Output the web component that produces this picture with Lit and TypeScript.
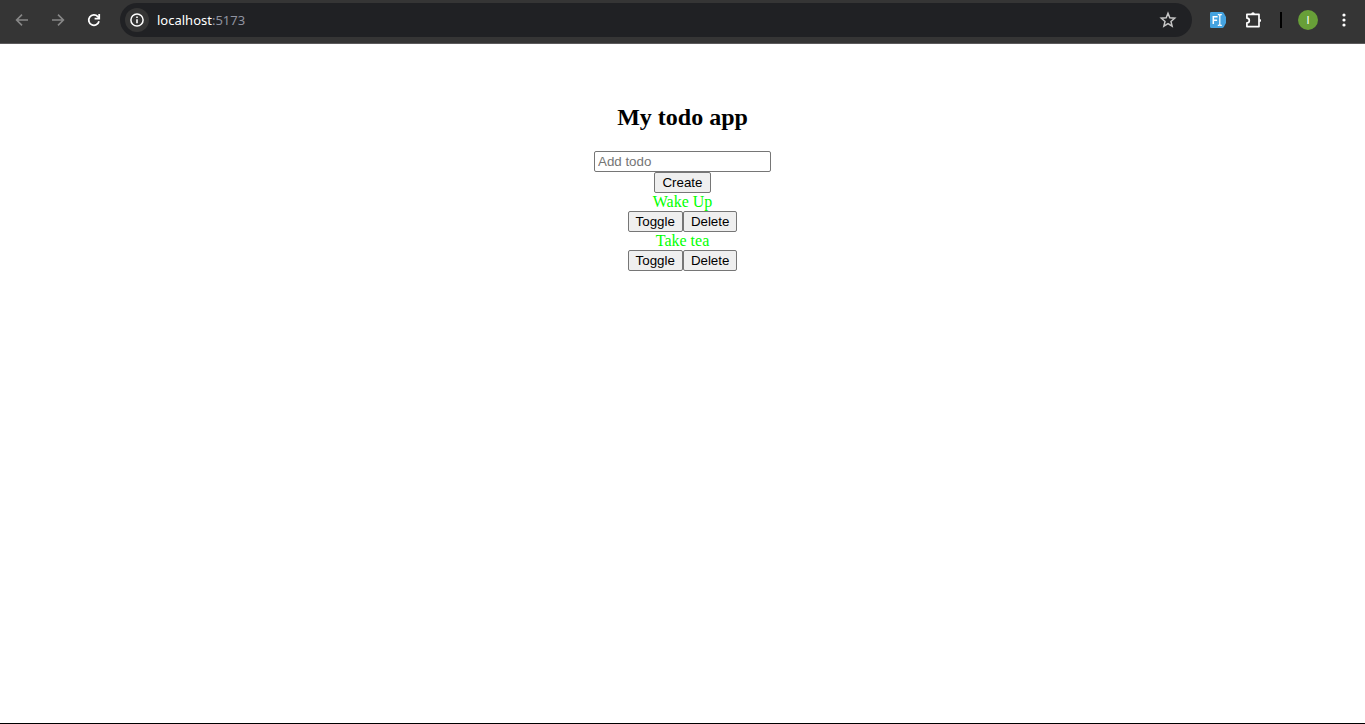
import { LitElement, html, css } from "lit";
import { customElement, property, state } from "lit/decorators.js";
import { classMap } from "lit/directives/class-map.js";

@customElement("browser-bar")
class BrowserBar extends LitElement {
  @property() host = "";
  @property() port = "";

  static styles = css`
    :host {
      display: block;
      background: #353535;
      border-bottom: 1px solid #5c5a5c;
      font-family: "Segoe UI", "Noto Sans", sans-serif;
    }
    .bar {
      display: flex;
      align-items: center;
      padding: 3px 9px 6px 10px;
    }
    .nav,
    .actions,
    .account {
      display: flex;
      align-items: center;
      gap: 12px;
    }
    button {
      display: flex;
      align-items: center;
      justify-content: center;
      width: 24px;
      height: 34px;
      padding: 0;
      border: 0;
      background: none;
      color: #fff;
    }
    button:disabled {
      color: #878787;
    }
    .omnibox {
      flex: 1;
      display: flex;
      align-items: center;
      height: 34px;
      margin: 0 14px;
      padding: 0 12px 0 5px;
      border-radius: 17px;
      box-sizing: border-box;
      background: #202124;
    }
    .omnibox .info {
      height: 24px;
      border-radius: 12px;
      background: #353535;
    }
    .omnibox .star {
      color: #c7c7c7;
    }
    .url {
      flex: 1;
      padding-left: 8px;
      color: #fff;
      font-size: 13px;
      line-height: 20px;
      outline: none;
    }
    .port {
      color: #9093a0;
    }
    .divider {
      width: 2px;
      height: 16px;
      margin: 0 14px;
      background: #000;
    }
    .avatar {
      width: 20px;
      height: 20px;
      border-radius: 10px;
      background: #689f38;
      color: #fff;
      font-size: 11px;
      line-height: 20px;
      text-align: center;
    }
    svg {
      display: block;
      fill: none;
      stroke: currentColor;
    }
    svg.solid {
      fill: currentColor;
      stroke: none;
    }
  `;

  render() {
    return html`
      <nav class="bar" aria-label="Browser">
        <div class="nav">
          <button disabled aria-label="Back">
            <svg width="16" height="16" stroke-width="1.6"><path d="M14 8H3M8 2.6 2.6 8 8 13.4" /></svg>
          </button>
          <button disabled aria-label="Forward">
            <svg width="16" height="16" stroke-width="1.6"><path d="M2 8h11M8 2.6 13.4 8 8 13.4" /></svg>
          </button>
          <button aria-label="Reload">
            <svg width="16" height="16" stroke-width="1.8"><path d="M13 9.3A5.2 5.2 0 1 1 11.8 4.6L13 6" /><path d="M13.2 2v4.7H8.6" /></svg>
          </button>
        </div>
        <div class="omnibox">
          <button class="info" aria-label="Site information">
            <svg width="16" height="16" stroke-width="1.5"><circle cx="8" cy="8" r="6.1" /><path d="M8 7.2v4M8 4.5v1.6" stroke-width="1.6" /></svg>
          </button>
          <div class="url" role="textbox" contenteditable="true" spellcheck="false" aria-label="Address">${this.host}<span class="port">:${this.port}</span></div>
          <button class="star" aria-label="Bookmark">
            <svg width="18" height="18" stroke-width="1.5"><path d="m9 2.3 1.8 4.5 4.9.4-3.7 3.2 1.1 4.8L9 12.6l-4.1 2.6L6 10.4 2.3 7.2l4.9-.4z" /></svg>
          </button>
        </div>
        <div class="actions">
          <button aria-label="Text extension">
            <svg class="solid" width="16" height="16">
              <path d="M1.2 0H12Q13.200 0 13.800 1L16 5v6l-2.200 4Q13.200 16 12 16H1.200Q0 16 0 14.800V1.200Q0 0 1.200 0z" fill="#45a3e0" />
              <path d="M3.300 12V4.700H7.600M3.300 8.200h3.800" fill="none" stroke="#fff" stroke-width="1.500" />
              <path d="M7.800 2.700h1.200l.8.800.8-.8h1.200M9.800 3.500v9M7.800 13.300h1.200l.8-.8.8.800h1.200" fill="none" stroke="#fff" stroke-width="1.200" />
            </svg>
          </button>
          <button aria-label="Extensions">
            <svg width="18" height="18" stroke-width="1.700" stroke-linejoin="round">
              <path d="M1.900 3.400H14v12.200H1.900v-3.700a2.400 2.400 0 0 0 0-4.800z" />
              <path d="M6.200 3.100a1.800 1.800 0 0 1 3.600 0zM14.300 7.700a1.800 1.800 0 0 1 0 3.600z" fill="#fff" stroke="none" />
            </svg>
          </button>
        </div>
        <div class="divider"></div>
        <div class="account">
          <button aria-label="Profile"><span class="avatar">I</span></button>
          <button aria-label="Menu">
            <svg class="solid" width="16" height="16"><circle cx="8" cy="3" r="1.6" /><circle cx="8" cy="8" r="1.6" /><circle cx="8" cy="13" r="1.6" /></svg>
          </button>
        </div>
      </nav>
    `;
  }
}

interface Todo {
  title: string;
  done: boolean;
}

@customElement("app-root")
class AppRoot extends LitElement {
  @state() private todos: Todo[] = [
    { title: "Wake Up", done: true },
    { title: "Take tea", done: true },
  ];
  @state() private draft = "";

  static styles = css`
    :host {
      display: flex;
      flex-direction: column;
      min-height: 100vh;
      box-sizing: border-box;
      border-bottom: 1px solid #000;
      background: #fff;
      color: #000;
      font: 16px/18px "Liberation Serif", "Times New Roman", serif;
    }
    main {
      flex: 1;
      padding-top: 40px;
      text-align: center;
    }
    h2 {
      margin: 20px 0;
      font-size: 24px;
      line-height: 27px;
    }
    form,
    .row {
      display: flex;
      justify-content: center;
    }
    form {
      flex-direction: column;
      align-items: center;
    }
    input,
    button {
      box-sizing: border-box;
      height: 21px;
      margin: 0;
      border: 1px solid #767676;
      border-radius: 2px;
      font-family: "Liberation Sans", Arial, sans-serif;
      line-height: 15px;
      color: #000;
    }
    input {
      width: 177px;
      padding: 1px 3px;
      background: #fff;
    }
    input::placeholder {
      color: #757575;
    }
    button {
      padding: 1px 7px;
      background: #efefef;
    }
    ul {
      margin: 0;
      padding: 0;
      list-style: none;
    }
    .title {
      color: #f00;
    }
    .title.done {
      color: #0f0;
    }
  `;

  private create(e: Event) {
    e.preventDefault();
    if (!this.draft) return;
    this.todos = [...this.todos, { title: this.draft, done: false }];
    this.draft = "";
  }

  private toggle(todo: Todo) {
    this.todos = this.todos.map((t) => (t === todo ? { ...t, done: !t.done } : t));
  }

  private remove(todo: Todo) {
    this.todos = this.todos.filter((t) => t !== todo);
  }

  render() {
    return html`
      <browser-bar host="localhost" port="5173"></browser-bar>
      <main>
        <h2>My todo app</h2>
        <form @submit=${this.create}>
          <input
            type="text"
            aria-label="Add todo"
            placeholder="Add todo"
            .value=${this.draft}
            @input=${(e: Event) => (this.draft = (e.target as HTMLInputElement).value)}
          />
          <button type="submit">Create</button>
        </form>
        <ul>
          ${this.todos.map(
            (todo) => html`
              <li>
                <div class=${classMap({ title: true, done: todo.done })}>${todo.title}</div>
                <div class="row">
                  <button @click=${() => this.toggle(todo)}>Toggle</button>
                  <button @click=${() => this.remove(todo)}>Delete</button>
                </div>
              </li>
            `
          )}
        </ul>
      </main>
    `;
  }
}
